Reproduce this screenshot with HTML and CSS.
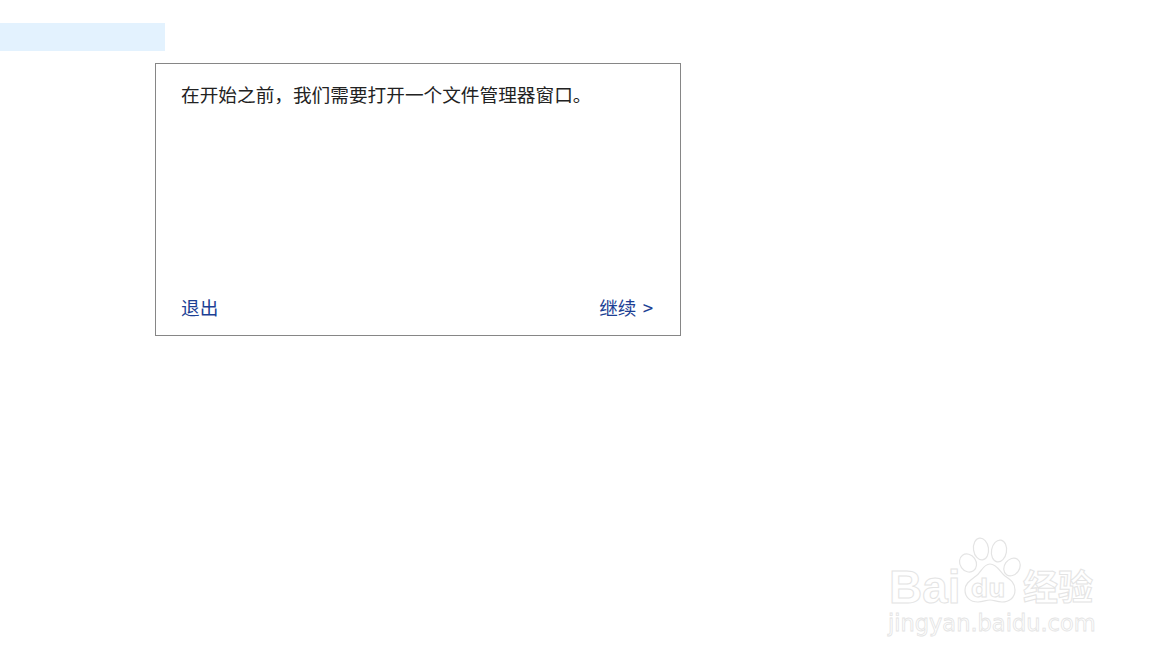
FILE: index.html
```html
<!DOCTYPE html>
<html lang="zh-CN">
<head>
  <meta charset="UTF-8" />
  <title>文件管理器</title>
  <link rel="stylesheet" href="styles.css">
</head>
<body>

  <div class="highlight"></div>

  <!-- Dialog -->
  <div class="dialog">
    <p class="message">在开始之前，我们需要打开一个文件管理器窗口。</p>
    <div class="actions">
      <a class="link">退出</a>
      <a class="link next">继续 &gt;</a>
    </div>
  </div>

  <!-- Watermark -->
  <div class="watermark">
    <svg class="paw" width="70" height="72" viewBox="0 0 70 72">
      <ellipse cx="12" cy="28" rx="8" ry="9.5" transform="rotate(-35 12 28)" />
      <ellipse cx="25" cy="14" rx="7.5" ry="11" transform="rotate(-8 25 14)" />
      <ellipse cx="43" cy="16" rx="7.5" ry="11" transform="rotate(10 43 16)" />
      <ellipse cx="56" cy="32" rx="7.5" ry="9.5" transform="rotate(35 56 32)" />
      <path d="M34 29c7 0 10 8 15 12 6 4 10 7 10 14 0 8-6 12-13 12-5 0-8-2-12-2s-7 2-12 2c-8 0-13-5-13-12 0-7 6-10 11-14 5-3 7-12 14-12z" />
    </svg>
    <span class="wm-bai">Bai</span>
    <span class="wm-du">du</span>
    <span class="wm-cn">经验</span>
    <span class="wm-url">jingyan.baidu.com</span>
  </div>

</body>
</html>
```

FILE: styles.css
```css
html, body {
  height: 100%;
}
body {
  margin: 0;
  padding-top: 23px;
  box-sizing: border-box;
  background: #fff;
  font-family: "Noto Sans CJK SC", "Liberation Sans", sans-serif;
  overflow: hidden;
}
.highlight {
  width: 165px;
  height: 28px;
  background: #e3f2fe;
}
.dialog {
  width: 526px;
  height: 273px;
  margin: 12px 0 0 155px;
  padding: 17px 27px 15px 25px;
  box-sizing: border-box;
  border: 1px solid #868686;
  display: flex;
  flex-direction: column;
  justify-content: space-between;
}
.message {
  margin: 0;
  font-size: 18.67px;
  line-height: 26px;
  color: #222;
}
.actions {
  display: flex;
  justify-content: space-between;
}
.link {
  font-size: 18.67px;
  line-height: 26px;
  color: #1c3f94;
}
.next {
  word-spacing: 2px;
}
.watermark {
  position: absolute;
  left: 885px;
  top: 535px;
  width: 215px;
  height: 105px;
  color: #fff;
  -webkit-text-stroke: 1px #e4e4e4;
  font-family: "Liberation Sans", sans-serif;
}
.paw {
  position: absolute;
  left: 71px;
  top: 0;
  fill: #fff;
  stroke: #e4e4e4;
  stroke-width: 1.2;
}
.watermark span {
  position: absolute;
  white-space: nowrap;
}
.wm-bai {
  left: 4px;
  top: 27px;
  font-size: 46px;
  line-height: 50px;
  font-weight: bold;
}
.wm-du {
  left: 86px;
  top: 40px;
  font-family: "DejaVu Sans", sans-serif;
  font-size: 24px;
  line-height: 28px;
  font-weight: bold;
}
.wm-cn {
  left: 138px;
  top: 30px;
  font-family: "Noto Sans CJK SC", sans-serif;
  font-size: 35px;
  line-height: 40px;
  font-weight: bold;
}
.wm-url {
  left: 3px;
  top: 74px;
  font-family: "DejaVu Sans", sans-serif;
  font-size: 22.5px;
  line-height: 28px;
  -webkit-text-stroke-width: 0.8px;
}
```
